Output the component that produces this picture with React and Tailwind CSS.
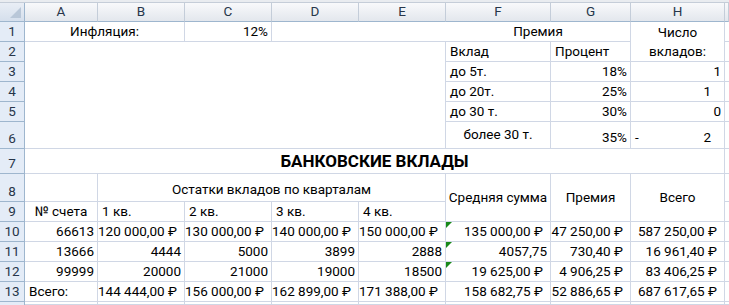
import React from "react";

const RS = {
  2: "row-start-2", 3: "row-start-3", 4: "row-start-4", 5: "row-start-5", 6: "row-start-6",
  7: "row-start-7", 8: "row-start-8", 9: "row-start-9", 10: "row-start-10", 11: "row-start-11",
  12: "row-start-12", 13: "row-start-13", 14: "row-start-14", 15: "row-start-15", 16: "row-start-16",
};
const CS = {
  1: "col-start-1", 2: "col-start-2", 3: "col-start-3", 4: "col-start-4", 5: "col-start-5",
  6: "col-start-6", 7: "col-start-7", 8: "col-start-8", 9: "col-start-9", 10: "col-start-10",
};
const RSPAN = { 1: "", 2: "row-span-2", 5: "row-span-5" };
const CSPAN = { 1: "", 2: "col-span-2", 4: "col-span-4", 5: "col-span-5", 8: "col-span-8" };

// r: excel row, c: excel col (1 = A)
function Cell({ r, c, rs = 1, cs = 1, children, cls = "", noR = false, tri = false }) {
  return (
    <div
      className={`${RS[r + 1]} ${CS[c + 1]} ${RSPAN[rs]} ${CSPAN[cs]} relative flex min-w-0 overflow-hidden whitespace-nowrap border-b border-[#d0d7e5] ${
        noR ? "" : "border-r"
      } ${cls}`}
    >
      {tri && (
        <span className="absolute left-0 top-0 h-0 w-0 border-r-[6px] border-t-[6px] border-r-transparent border-t-[#18891a]" />
      )}
      {children}
    </div>
  );
}

const L = "items-center justify-start pl-[4px]";
const R = "items-center justify-end pr-[3px]";
const RC = "items-center justify-end pr-[7px]";
const C = "items-center justify-center";

const data = [
  ["66613", "120 000,00 ₽", "130 000,00 ₽", "140 000,00 ₽", "150 000,00 ₽", "135 000,00 ₽", "47 250,00 ₽", "587 250,00 ₽"],
  ["13666", "4444", "5000", "3899", "2888", "4057,75", "730,40 ₽", "16 961,40 ₽"],
  ["99999", "20000", "21000", "19000", "18500", "19 625,00 ₽", "4 906,25 ₽", "83 406,25 ₽"],
  ["Всего:", "144 444,00 ₽", "156 000,00 ₽", "162 899,00 ₽", "171 388,00 ₽", "158 682,75 ₽", "52 886,65 ₽", "687 617,65 ₽"],
];

export default function App() {
  const letters = ["A", "B", "C", "D", "E", "F", "G", "H", ""];
  const rowNums = ["1", "2", "3", "4", "5", "6", "7", "8", "9", "10", "11", "12", "13", ""];
  return (
    <div
      className="h-[305px] w-[729px] overflow-hidden bg-white text-[13.5px] leading-none text-black"
      style={{ fontFamily: "Roboto, 'Noto Sans', 'DejaVu Sans', sans-serif" }}
    >
      <div className="h-[3px] border-b border-[#c5cdd8] bg-[#e9ecf0]" />
      <div className="grid h-[302px] grid-cols-[25px_73px_87px_87px_87px_87px_105px_80px_94px_1fr] grid-rows-[19px_20px_20px_20px_20px_20px_27px_25px_28px_20px_20px_20px_20px_20px_3px]">
        {/* corner */}
        <div className="relative col-start-1 row-start-1 border-b border-r border-[#9eb6ce] bg-gradient-to-b from-[#e9eef5] to-[#d5dfec]">
          <span className="absolute bottom-[3px] right-[3px] h-0 w-0 border-b-[11px] border-l-[11px] border-b-[#b9c7d8] border-l-transparent" />
        </div>
        {/* column headers */}
        {letters.map((l, i) => (
          <div
            key={"h" + i}
            className={`${CS[i + 2]} row-start-1 flex items-center justify-center border-b border-r border-b-[#9eb6ce] border-r-[#c4cdd9] bg-gradient-to-b from-[#f8f9fb] to-[#e3e7ed] text-[#27364a]`}
          >
            {l}
          </div>
        ))}
        {/* row headers */}
        {rowNums.map((n, i) => (
          <div
            key={"r" + i}
            className={`${RS[i + 2]} col-start-1 flex items-end justify-center border-b border-r border-[#9eb6ce] bg-[#e4ecf7] pb-[3px] text-[#27364a]`}
          >
            {n}
          </div>
        ))}

        {/* row 1 */}
        <Cell r={1} c={1} cs={2} cls={C}>Инфляция:</Cell>
        <Cell r={1} c={3} cls={R}>12%</Cell>
        <Cell r={1} c={4} cs={2} noR />
        <Cell r={1} c={6} cs={2} cls={C}>Премия</Cell>
        <Cell r={1} c={8} rs={2} cls="flex-col items-center justify-center gap-[6px] leading-[13px]">
          <span>Число</span>
          <span>вкладов:</span>
        </Cell>

        {/* rows 2-6 */}
        <Cell r={2} c={1} rs={5} cs={5} />
        <Cell r={2} c={6} cls={L}>Вклад</Cell>
        <Cell r={2} c={7} cls={L}>Процент</Cell>

        <Cell r={3} c={6} cls={L}>до 5т.</Cell>
        <Cell r={3} c={7} cls={R}>18%</Cell>
        <Cell r={3} c={8} cls={R}>1</Cell>

        <Cell r={4} c={6} cls={L}>до 20т.</Cell>
        <Cell r={4} c={7} cls={R}>25%</Cell>
        <Cell r={4} c={8} cls="items-center justify-end pr-[13px]">1</Cell>

        <Cell r={5} c={6} cls={L}>до 30 т.</Cell>
        <Cell r={5} c={7} cls={R}>30%</Cell>
        <Cell r={5} c={8} cls={R}>0</Cell>

        <Cell r={6} c={6} cls={C}>более 30 т.</Cell>
        <Cell r={6} c={7} cls="items-end justify-end pb-[4px] pr-[3px]">35%</Cell>
        <Cell r={6} c={8} cls="items-end justify-between pb-[4px] pl-[4px] pr-[13px]">
          <span>-</span>
          <span>2</span>
        </Cell>

        {/* row 7 */}
        <Cell r={7} c={1} cs={8} cls="items-center justify-center text-[17px] font-bold">
          БАНКОВСКИЕ ВКЛАДЫ
        </Cell>

        {/* row 8-9 */}
        <Cell r={8} c={1} />
        <Cell r={8} c={2} cs={4} cls="items-end justify-center pb-[5px]">Остатки вкладов по кварталам</Cell>
        <Cell r={8} c={6} rs={2} cls={C}>Средняя сумма</Cell>
        <Cell r={8} c={7} rs={2} cls={C}>Премия</Cell>
        <Cell r={8} c={8} rs={2} cls={C}>Всего</Cell>

        <Cell r={9} c={1} cls={C}>№ счета</Cell>
        <Cell r={9} c={2} cls={L}>1 кв.</Cell>
        <Cell r={9} c={3} cls={L}>2 кв.</Cell>
        <Cell r={9} c={4} cls={L}>3 кв.</Cell>
        <Cell r={9} c={5} cls={L}>4 кв.</Cell>

        {data.map((row, ri) =>
          row.map((v, ci) => {
            const r = 10 + ri;
            const c = ci + 1;
            let cls = v.includes("₽") ? RC : R;
            if (v === "Всего:") cls = L;
            return (
              <Cell key={`${r}-${c}`} r={r} c={c} cls={cls} tri={c === 6 && r <= 12}>
                {v}
              </Cell>
            );
          })
        )}

        {/* row 14 partial */}
        {[1, 2, 3, 4, 5, 6, 7, 8].map((c) => (
          <Cell key={"14-" + c} r={14} c={c} />
        ))}

        {/* column I */}
        {[1, 2, 3, 4, 5, 6, 7, 8, 9, 10, 11, 12, 13, 14].map((r) => (
          <Cell key={"I" + r} r={r} c={9} noR />
        ))}
      </div>
    </div>
  );
}
